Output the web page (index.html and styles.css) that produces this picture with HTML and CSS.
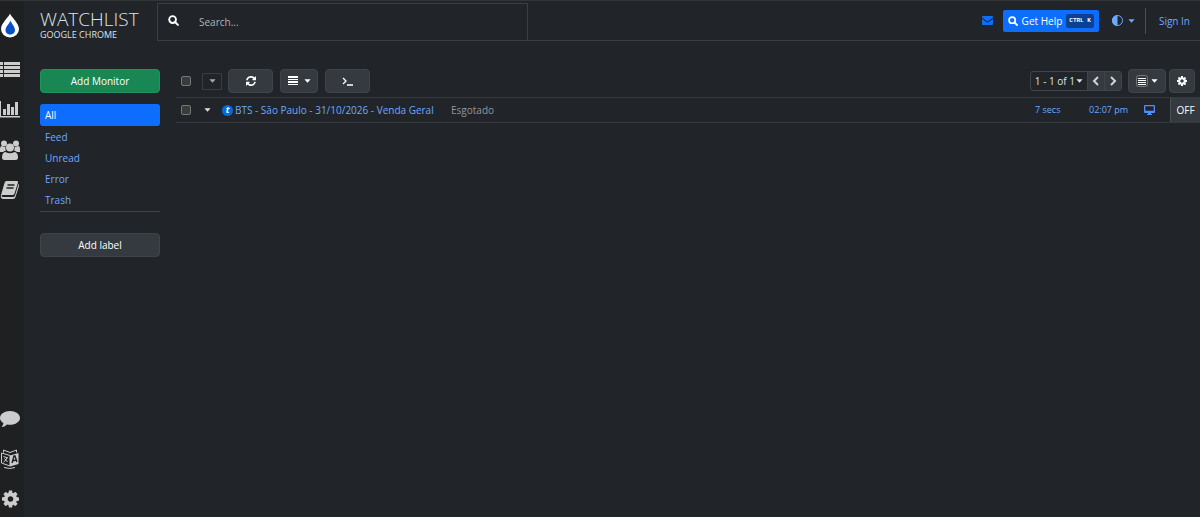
FILE: index.html
```html
<!DOCTYPE html>
<html lang="en">
<head>
  <meta charset="UTF-8" />
  <meta name="viewport" content="width=device-width, initial-scale=1" />
  <title>Watchlist</title>
  <link rel="stylesheet" href="styles.css">
</head>
<body>
  <!-- Shared icons -->
  <svg class="sprite" aria-hidden="true">
    <symbol id="icon-gear" viewBox="128 128 1536 1536"><path d="M1152 896q0-106-75-181t-181-75-181 75-75 181 75 181 181 75 181-75 75-181zm512-109v222q0 12-8 23t-20 13l-185 28q-19 54-39 91 35 50 107 138 10 12 10 25t-9 23q-27 37-99 108t-94 71q-12 0-26-9l-138-108q-44 23-91 38-16 136-29 186-7 28-36 28h-222q-14 0-24.5-8.5t-11.5-21.5l-28-184q-49-16-90-37l-141 107q-10 9-25 9-14 0-25-11-126-114-165-168-7-10-7-23 0-12 8-23 15-21 51-66.5t54-70.5q-27-50-41-99l-183-27q-13-2-21-12.5t-8-23.5v-222q0-12 8-23t19-13l186-28q14-46 39-92-40-57-107-138-10-12-10-24 0-10 9-23 26-36 98.5-107.5t94.5-71.5q13 0 26 10l138 107q44-23 91-38 16-136 29-186 7-28 36-28h222q14 0 24.5 8.5t11.5 21.5l28 184q49 16 90 37l142-107q9-9 24-9 13 0 25 10 129 119 165 170 7 8 7 22 0 12-8 23-15 21-51 66.5t-54 70.5q26 50 41 98l183 28q13 2 21 12.5t8 23.5z"/></symbol>
    <symbol id="icon-search" viewBox="0 0 12 12"><circle cx="5" cy="5" r="3.7" fill="none" stroke="currentColor" stroke-width="2"/><path d="M7.7 7.7 10.8 10.8" stroke="currentColor" stroke-width="2.2" stroke-linecap="round"/></symbol>
    <symbol id="icon-caret" viewBox="0 0 8 4"><path d="M.5 0h7L4 4z"/></symbol>
  </svg>

  <nav class="rail" aria-label="Main">
    <a class="logo" href="#" aria-label="Home">
      <svg viewBox="0 0 18 24"><path fill="#fff" d="M9 0C8 3.500 0 9.500 0 15.500a9 8.500 0 0 0 18 0C18 9.500 10 3.500 9 0z"/><path fill="#0850c8" d="M9.500 7C9 9.500 4.500 13 4.500 16.500c0 6 9.500 6 9.500 0C14 13 10 9.500 9.500 7z"/></svg>
    </a>
    <a href="#" aria-label="Watchlist">
      <svg viewBox="0 0 20 20"><path d="M0 2h3v3H0zM4 2h16v3H4zM0 6h3v3H0zM4 6h16v3H4zM0 10h3v3H0zM4 10h16v3H4zM0 14h3v3H0zM4 14h16v3H4z"/></svg>
    </a>
    <a href="#" aria-label="Charts">
      <svg viewBox="0 0 20 20"><path d="M0 1h1v15h20v1.500H0zM3 9h3v6H3zM7 4h3v11H7zM11 7h3v8h-3zM15 2h3v13h-3z"/></svg>
    </a>
    <a href="#" aria-label="Team">
      <svg viewBox="0 0 20 20"><circle cx="4" cy="3.500" r="3"/><circle cx="16" cy="3.500" r="3"/><path d="M0 12V9q0-3 2-3 2 1.500 3.500.8Q5 9 6 10.500 4 11 3 12zM20 12V9q0-3-2-3-2 1.500-3.500.8Q15 9 14 10.500q2 .5 3 1.500z"/><circle cx="10" cy="7.500" r="4"/><path d="M5.500 12Q10 14.500 14.500 12 18 12.500 18 17.500 18 20 15.500 20h-11Q2 20 2 17.500 2 12.500 5.500 12z"/></svg>
    </a>
    <a href="#" aria-label="Docs">
      <svg viewBox="0 0 20 20"><path d="M6.500 1h10.500q1.500 0 1 1.500l-3.500 11Q14 15 12.500 15H3q-1.500 0-1.500 1t1.500 1h10q1.500 0 2-1.500L18.500 4q1 .5.500 2l-3.500 11q-.5 2-2.500 2H3.500Q0 19 1 15L4.500 3Q5 1 6.500 1z"/><path d="M7.500 5h7M6.500 8h7" stroke="#1f2022" stroke-width="1.300"/></svg>
    </a>
    <div class="rail-bottom">
      <a href="#" aria-label="Feedback">
        <svg viewBox="0 0 20 20"><path d="M10 2C4.500 2 0 5 0 9q0 3 3.500 5.200Q3 16.500 1.500 18q3 0 5.500-2.500 1.500.3 3 .3c5.500 0 10-3 10-6.800S15.500 2 10 2z"/></svg>
      </a>
      <a href="#" aria-label="Language">
        <svg viewBox="0 0 20 20"><path d="M1.500 4 10 6.500V17L1.500 14z" fill="none" stroke="#ccc"/><path d="M10 6.500 18.500 4v11L10 17.500z"/><path d="M3.500 3.500V1L10 3.500 16.500 1v2.500" fill="none" stroke="#ccc"/><path d="M3.500 7.500 8 9M7 8.500Q6 12 3.500 13M4.500 9.500 7.500 13M4 18.500q6 2 11 0" fill="none" stroke="#ccc"/><path d="m12 14 2-7h1l2 6M12.500 12l3.500-1" fill="none" stroke="#1f2022" stroke-width="1.400"/></svg>
      </a>
      <a href="#" aria-label="Settings"><svg class="gear"><use href="#icon-gear"/></svg></a>
    </div>
  </nav>

  <div class="app">
    <header class="topbar">
      <div class="brand">
        <h1>WATCHLIST</h1>
        <p>GOOGLE CHROME</p>
      </div>
      <div class="topbar-main">
        <label class="search">
          <svg><use href="#icon-search"/></svg>
          <input type="text" placeholder="Search..." aria-label="Search" />
        </label>
        <div class="actions">
          <a class="mail" href="#" aria-label="Messages">
            <svg viewBox="0 0 11 9"><path d="M1 0h9q1 0 1 1v.8L5.500 5.500 0 1.800V1q0-1 1-1zM0 3l5.500 3.700L11 3v5q0 1-1 1H1Q0 9 0 8z"/></svg>
          </a>
          <button class="help"><svg><use href="#icon-search"/></svg>Get Help <kbd>CTRL K</kbd></button>
          <button class="theme" aria-label="Theme">
            <svg viewBox="0 0 11 11"><circle cx="5.500" cy="5.500" r="5" fill="none" stroke="currentColor"/><path d="M5.500 0a5.500 5.500 0 0 0 0 11z"/></svg>
            <svg class="caret"><use href="#icon-caret"/></svg>
          </button>
          <a class="sign-in" href="#">Sign In</a>
        </div>
      </div>
    </header>

    <div class="content">
      <aside class="sidebar">
        <button class="btn add-monitor">Add Monitor</button>
        <nav class="labels" aria-label="Labels">
          <a class="active" href="#">All</a>
          <a href="#">Feed</a>
          <a href="#">Unread</a>
          <a href="#">Error</a>
          <a href="#">Trash</a>
        </nav>
        <button class="btn">Add label</button>
      </aside>

      <main>
        <div class="toolbar">
          <input type="checkbox" aria-label="Select all" />
          <button class="select-menu" aria-label="Selection options"><svg class="caret"><use href="#icon-caret"/></svg></button>
          <button class="btn wide" aria-label="Refresh">
            <svg class="icon" viewBox="128 128 1536 1536"><path d="M1639 1056q0 5-1 7-64 268-268 434.500t-478 166.500q-146 0-282.500-55t-243.500-157l-129 129q-19 19-45 19t-45-19-19-45v-448q0-26 19-45t45-19h448q26 0 45 19t19 45-19 45l-137 137q71 66 161 102t187 36q134 0 250-65t186-179q11-17 53-117 8-23 30-23h192q13 0 22.500 9.500t9.500 22.500zm25-800v448q0 26-19 45t-45 19h-448q-26 0-45-19t-19-45 19-45l138-138q-148-137-349-137-134 0-250 65t-186 179q-11 17-53 117-8 23-30 23h-199q-13 0-22.500-9.500t-9.500-22.500v-7q65-268 270-434.500t480-166.500q146 0 284 55.500t245 156.500l130-129q19-19 45-19t45 19 19 45z"/></svg>
          </button>
          <button class="btn menu" aria-label="Actions">
            <svg class="icon" viewBox="0 0 10 10"><path d="M0 0h10v2H0zM0 3h10v1H0zM0 5h10v2H0zM0 8h10v1H0z"/></svg>
            <svg class="caret"><use href="#icon-caret"/></svg>
          </button>
          <button class="btn wide" aria-label="Console">
            <svg class="prompt" viewBox="0 0 12 10"><path d="m1 2 3 3-3 3M5 9h6" fill="none" stroke="currentColor" stroke-width="1.300"/></svg>
          </button>

          <div class="pager">
            <button>1 - 1 of 1<svg class="caret"><use href="#icon-caret"/></svg></button>
            <button class="step" aria-label="Previous"><svg viewBox="0 0 8 10"><path d="M6 1 2 5l4 4"/></svg></button>
            <button class="step" aria-label="Next"><svg viewBox="0 0 8 10"><path d="m2 1 4 4-4 4"/></svg></button>
          </div>
          <button class="btn menu view-menu" aria-label="View">
            <svg class="view" viewBox="0 0 12 12"><rect x=".5" y=".5" width="11" height="11" rx="2" fill="none" stroke="#777"/><path d="M2 3h8v1H2zM2 5h8v1H2zM2 7h8v1H2zM2 9h8v1H2z"/></svg>
            <svg class="caret"><use href="#icon-caret"/></svg>
          </button>
          <button class="btn options" aria-label="Options"><svg class="icon"><use href="#icon-gear"/></svg></button>
        </div>

        <table class="monitors">
          <tbody>
            <tr>
              <td class="check"><input type="checkbox" aria-label="Select monitor" /></td>
              <td class="expand"><button aria-label="Expand"><svg class="caret"><use href="#icon-caret"/></svg></button></td>
              <td class="name"><a href="#"><span class="favicon">t</span>BTS - São Paulo - 31/10/2026 - Venda Geral</a></td>
              <td class="value">Esgotado</td>
              <td class="interval"><a href="#">7 secs</a></td>
              <td class="time"><a href="#">02:07 pm</a></td>
              <td class="device">
                <svg viewBox="0 0 11 10"><path fill-rule="evenodd" d="M1 0h9q1 0 1 1v6q0 1-1 1H7v1h1v1H3V9h1V8H1Q0 8 0 7V1q0-1 1-1zm.3 1.300v4.400h8.400V1.300z"/></svg>
              </td>
              <td class="state"><button>OFF</button></td>
            </tr>
          </tbody>
        </table>
      </main>
    </div>
  </div>
</body>
</html>
```

FILE: styles.css
```css
* {
  margin: 0;
  padding: 0;
  box-sizing: border-box;
}

body {
  display: flex;
  min-height: 100vh;
  background-color: #212529;
  border-top: 1px solid #303536;
  color: #dee2e6;
  font-family: "Open Sans", "Noto Sans", sans-serif;
  font-size: 10px;
  line-height: 16px;
}

a {
  color: #6ea8fe;
  text-decoration: none;
}

button,
input {
  font: inherit;
  color: inherit;
}

button {
  background: none;
  border: none;
  cursor: pointer;
}

svg {
  display: block;
  flex: none;
  fill: currentColor;
}

.sprite {
  position: absolute;
  width: 0;
  height: 0;
}

.caret {
  width: 7px;
  height: 4px;
}

.icon {
  width: 10px;
  height: 10px;
}

/* Icon rail */
.rail {
  display: flex;
  flex-direction: column;
  gap: 20px;
  width: 24px;
  padding: 12px 0 8px;
  background-color: #1f2022;
}

.rail a {
  display: flex;
  justify-content: center;
  width: 20px;
  color: #ccc;
}

.rail svg {
  width: 20px;
  height: 20px;
}

.rail .logo svg {
  width: 18px;
  height: 25px;
  margin-bottom: 2px;
}

.rail .gear {
  width: 17px;
}

.rail-bottom {
  display: flex;
  flex-direction: column;
  gap: 20px;
  margin-top: auto;
}

/* Header */
.app {
  flex: 1;
  min-width: 0;
}

.topbar {
  display: flex;
  height: 40px;
}

.brand {
  width: 133px;
  padding: 8px 0 0 16px;
}

.brand h1 {
  font-size: 19px;
  font-weight: 300;
  line-height: 20px;
}

.brand p {
  font-size: 9px;
  line-height: 12px;
}

.topbar-main {
  flex: 1;
  display: flex;
  justify-content: space-between;
  border-bottom: 1px solid #3a3f44;
}

.search {
  display: flex;
  align-items: center;
  width: 371px;
  margin-top: 2px;
  padding-left: 10px;
  border: 1px solid #3a3f44;
  border-bottom: none;
}

.search svg {
  width: 11px;
  height: 11px;
  margin-bottom: 4px;
  color: #fff;
}

.search input {
  flex: 1;
  min-width: 0;
  padding-left: 20px;
  background: none;
  border: none;
  outline: none;
}

.search input::placeholder {
  color: #b0b4b8;
  opacity: 1;
}

.actions {
  display: flex;
  align-items: center;
  padding-right: 10px;
}

.mail {
  margin-right: 10px;
  color: #0d6efd;
}

.mail svg {
  width: 11px;
  height: 9px;
}

.help {
  display: flex;
  align-items: center;
  gap: 4px;
  height: 22px;
  padding: 0 5px;
  background-color: #0d6efd;
  border-radius: 2px;
  color: #fff;
}

.help svg {
  width: 10px;
  height: 10px;
}

kbd {
  padding: 0 3px;
  background-color: #0a4193;
  border-radius: 2px;
  font-family: "Liberation Mono", monospace;
  font-size: 6px;
  font-weight: bold;
  line-height: 14px;
}

.theme {
  display: flex;
  align-items: center;
  gap: 5px;
  padding: 0 10px 0 13px;
  color: #6ea8fe;
}

.theme svg:first-child {
  width: 11px;
  height: 11px;
}

.sign-in {
  padding-left: 13px;
  border-left: 1px solid #4b5055;
  line-height: 26px;
}

/* Sidebar */
.content {
  display: flex;
  padding-top: 28px;
}

.sidebar {
  display: flex;
  flex-direction: column;
  width: 152px;
  padding: 0 16px;
}

.btn {
  display: flex;
  align-items: center;
  justify-content: center;
  gap: 6px;
  height: 24px;
  background-color: #343a40;
  border: 1px solid #3e444a;
  border-radius: 4px;
  color: #fff;
}

.add-monitor {
  background-color: #198754;
  border-color: #1f935d;
}

.labels {
  margin: 11px 0 21px;
  border-bottom: 1px solid #40454a;
}

.labels a {
  display: block;
  padding: 0 5px;
  line-height: 21px;
}

.labels .active {
  margin-bottom: 1px;
  background-color: #0d6efd;
  border-radius: 3px;
  color: #fff;
  line-height: 22px;
}

/* Toolbar */
main {
  flex: 1;
  min-width: 0;
}

.toolbar {
  display: flex;
  align-items: center;
  padding: 0 5px 4px;
}

input[type="checkbox"] {
  appearance: none;
  display: block;
  width: 10px;
  height: 10px;
  background-color: #3b3b3b;
  border: 1px solid #777;
  border-radius: 2px;
}

.select-menu {
  display: flex;
  align-items: center;
  justify-content: center;
  width: 20px;
  height: 17px;
  margin: 0 6px 0 11px;
  border: 1px solid #383d42;
  color: #aaa;
}

.wide {
  width: 45px;
}

.menu {
  width: 38px;
  margin: 0 7px;
}

.prompt {
  width: 12px;
  height: 10px;
}

.pager {
  display: flex;
  height: 20px;
  margin-left: auto;
  border: 1px solid #40454a;
  border-radius: 3px;
}

.pager button {
  display: flex;
  align-items: center;
  gap: 1px;
  padding: 0 4px;
}

.pager .step {
  background-color: #343a40;
  border-left: 1px solid #40454a;
}

.step svg {
  width: 8px;
  height: 10px;
  fill: none;
  stroke: #ced4da;
  stroke-width: 2;
}

.view {
  width: 12px;
  height: 12px;
}

.view-menu {
  gap: 3px;
  margin: 0 3px 0 6px;
}

.options {
  width: 26px;
}

/* Monitor list */
.monitors {
  width: 100%;
  border-collapse: collapse;
  table-layout: fixed;
}

.monitors td {
  height: 25px;
  border: solid #343a3f;
  border-width: 1px 0;
}

.check {
  width: 24px;
  padding-left: 5px;
}

.expand {
  width: 22px;
  padding-left: 4px;
}

.expand button {
  display: block;
}

.name {
  width: 229px;
}

.name a {
  display: flex;
  align-items: center;
  gap: 2px;
  white-space: nowrap;
}

.favicon {
  width: 11px;
  height: 11px;
  background-color: #026cdf;
  border-radius: 50%;
  color: #fff;
  font-size: 9px;
  font-style: italic;
  font-weight: bold;
  line-height: 10px;
  text-align: center;
}

.value {
  color: #91969b;
}

.interval {
  width: 54px;
  font-size: 9px;
}

.time {
  width: 55px;
  font-size: 9px;
}

.device {
  width: 26px;
  color: #4c8dff;
}

.device svg {
  width: 11px;
  height: 10px;
}

.state {
  width: 30px;
}

.state button {
  display: block;
  width: 100%;
  height: 24px;
  background-color: #343a40;
  border-left: 1px solid #4b5055;
  color: #fff;
}
```
